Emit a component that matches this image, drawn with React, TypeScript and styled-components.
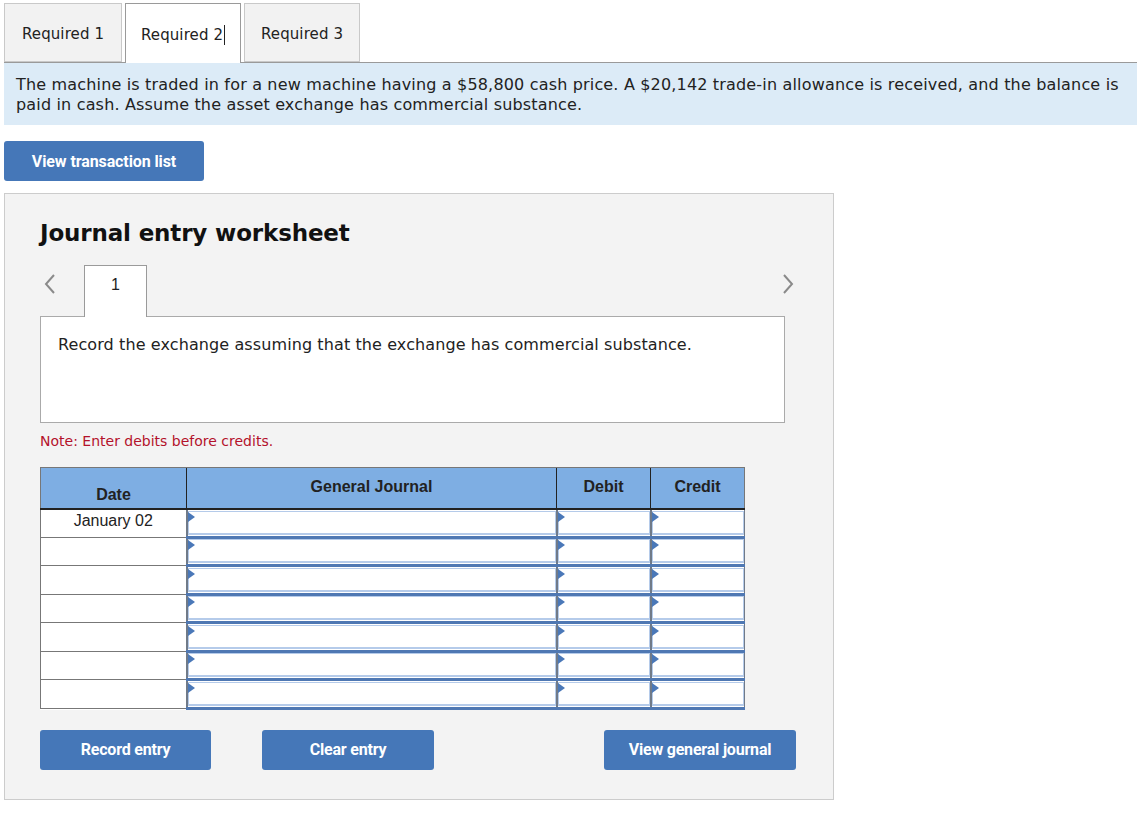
import React from 'react';
import styled, { createGlobalStyle } from 'styled-components';

const GlobalStyle = createGlobalStyle`
  html, body {
    margin: 0;
    padding: 0;
    background: #ffffff;
  }
  body {
    font-family: "DejaVu Sans", Verdana, sans-serif;
    color: #222222;
  }
`;

const rows = ['January 02', '', '', '', '', '', ''];

const ChevronLeft = () => (
  <svg width="12" height="22" viewBox="0 0 12 22">
    <polyline points="10,2 2,11 10,20" fill="none" stroke="#8a8a8a" strokeWidth="2" />
  </svg>
);

const ChevronRight = () => (
  <svg width="12" height="22" viewBox="0 0 12 22">
    <polyline points="2,2 10,11 2,20" fill="none" stroke="#8a8a8a" strokeWidth="2" />
  </svg>
);

const App = () => {
  return (
    <Page>
      <GlobalStyle />
      <Tabs>
        <Tab $width={118}>Required 1</Tab>
        <Tab $width={116} $active>
          Required 2<Caret />
        </Tab>
        <Tab $width={116}>Required 3</Tab>
      </Tabs>
      <Info>
        The machine is traded in for a new machine having a $58,800 cash price. A $20,142 trade-in
        allowance is received, and the balance is paid in cash. Assume the asset exchange has
        commercial substance.
      </Info>
      <TransactionButton>View transaction list</TransactionButton>

      <Worksheet>
        <Title>Journal entry worksheet</Title>
        <NavRow>
          <NavArrow $left>
            <ChevronLeft />
          </NavArrow>
          <EntryTab>1</EntryTab>
          <Spacer />
          <NavArrow>
            <ChevronRight />
          </NavArrow>
        </NavRow>
        <Question>Record the exchange assuming that the exchange has commercial substance.</Question>
        <Note>Note: Enter debits before credits.</Note>

        <Journal>
          <colgroup>
            <col style={{ width: 146 }} />
            <col style={{ width: 370 }} />
            <col style={{ width: 94 }} />
            <col style={{ width: 94 }} />
          </colgroup>
          <thead>
            <tr>
              <HeadCell $bottom>Date</HeadCell>
              <HeadCell>General Journal</HeadCell>
              <HeadCell>Debit</HeadCell>
              <HeadCell>Credit</HeadCell>
            </tr>
          </thead>
          <tbody>
            {rows.map((date, i) => (
              <tr key={i}>
                <DateCell>{date}</DateCell>
                {[0, 1, 2].map((c) => (
                  <InputCell key={c}>
                    <InputBox>
                      <Marker />
                    </InputBox>
                  </InputCell>
                ))}
              </tr>
            ))}
          </tbody>
        </Journal>

        <ButtonRow>
          <ActionButton $width={171}>Record entry</ActionButton>
          <ActionButton $width={172} $offset={51}>
            Clear entry
          </ActionButton>
          <ActionButton $width={192} $offset={170}>
            View general journal
          </ActionButton>
        </ButtonRow>
      </Worksheet>
    </Page>
  );
};

export default App;

const Page = styled.div`
  padding: 3px 0 0 4px;
  width: 1133px;
`;

const Tabs = styled.div`
  display: flex;
  gap: 3px;
  height: 59px;
  border-bottom: 1px solid #9a9a9a;
`;

const Tab = styled.div<{ $width: number; $active?: boolean }>`
  position: relative;
  box-sizing: border-box;
  width: ${(p) => p.$width}px;
  height: ${(p) => (p.$active ? 60 : 59)}px;
  margin-bottom: ${(p) => (p.$active ? -1 : 0)}px;
  display: flex;
  align-items: center;
  justify-content: center;
  padding-top: 2px;
  font-size: 15px;
  letter-spacing: 0.1px;
  color: #222;
  background: ${(p) => (p.$active ? '#ffffff' : '#f2f2f2')};
  border: 1px solid ${(p) => (p.$active ? '#9a9a9a' : '#c9c9c9')};
  border-bottom: ${(p) => (p.$active ? 'none' : '1px solid #c9c9c9')};
`;

const Caret = styled.span`
  display: inline-block;
  width: 1px;
  height: 20px;
  margin-left: 1px;
  background: #222;
`;

const Info = styled.div`
  box-sizing: border-box;
  height: 62px;
  padding: 12px 12px 0 12px;
  background: #dcebf7;
  font-size: 16px;
  line-height: 19.5px;
  letter-spacing: 0.17px;
  color: #222;
`;

const TransactionButton = styled.button`
  display: block;
  margin-top: 16px;
  width: 200px;
  height: 40px;
  border: none;
  border-radius: 3px;
  background: #4577b8;
  color: #ffffff;
  font-family: Roboto, "Liberation Sans", Arial, sans-serif;
  font-weight: 700;
  font-size: 16px;
  letter-spacing: -0.1px;
  padding: 0;
`;

const Worksheet = styled.div`
  box-sizing: border-box;
  margin-top: 12px;
  width: 830px;
  height: 607px;
  padding: 24px 0 0 35px;
  background: #f3f3f3;
  border: 1px solid #cccccc;
`;

const Title = styled.h2`
  margin: 0;
  font-size: 23px;
  line-height: 30px;
  letter-spacing: -0.15px;
  font-weight: 700;
  color: #111;
`;

const NavRow = styled.div`
  display: flex;
  align-items: flex-start;
  width: 756px;
  margin-top: 17px;
`;

const NavArrow = styled.div<{ $left?: boolean }>`
  width: ${(p) => (p.$left ? 44 : 14)}px;
  padding: 8px 0 0 ${(p) => (p.$left ? 4 : 0)}px;
  box-sizing: border-box;
  display: flex;
`;

const EntryTab = styled.div`
  box-sizing: border-box;
  width: 63px;
  height: 52px;
  margin-bottom: -1px;
  padding-top: 10px;
  text-align: center;
  background: #ffffff;
  border: 1px solid #9a9a9a;
  border-bottom: none;
  font-family: "Liberation Sans", Arial, sans-serif;
  font-size: 16px;
  color: #222;
  position: relative;
  z-index: 1;
`;

const Spacer = styled.div`
  flex: 1;
`;

const Question = styled.div`
  box-sizing: border-box;
  width: 745px;
  height: 107px;
  padding: 18px 17px;
  background: #ffffff;
  border: 1px solid #aaaaaa;
  font-size: 16px;
  line-height: 20px;
  letter-spacing: 0.1px;
  color: #222;
`;

const Note = styled.div`
  margin-top: 9px;
  font-size: 14px;
  line-height: 18px;
  color: #b3122b;
`;

const Journal = styled.table`
  margin-top: 17px;
  width: 705px;
  border-collapse: collapse;
  table-layout: fixed;
  font-family: "Liberation Sans", Arial, sans-serif;
  background: #ffffff;
  border: 1px solid #777777;
`;

const HeadCell = styled.th<{ $bottom?: boolean }>`
  height: 41px;
  padding: 0 0 ${(p) => (p.$bottom ? 4 : 2)}px 0;
  box-sizing: border-box;
  background: #7eaee3;
  font-size: 16px;
  font-weight: 700;
  color: #222;
  text-align: center;
  vertical-align: ${(p) => (p.$bottom ? 'bottom' : 'middle')};
  border-left: 1px solid #222;
  border-top: 1px solid #777;
  border-bottom: 2px solid #222;
  &:first-child {
    border-left: 1px solid #777;
  }
`;

const DateCell = styled.td`
  height: 28.5px;
  padding: 0 0 4px 0;
  box-sizing: border-box;
  border: 1px solid #777777;
  font-size: 16px;
  color: #222;
  text-align: center;
`;

const InputCell = styled.td`
  height: 28.5px;
  padding: 0;
  box-sizing: border-box;
  border-left: 2px solid #707a88;
  border-right: 1px solid #707a88;
  border-bottom: 3px solid #4f78b3;
`;

const InputBox = styled.div`
  position: relative;
  box-sizing: border-box;
  height: 24px;
  background: #ffffff;
  border: 1px solid #b5cbea;
  border-bottom: 2px solid #b5cbea;
`;

const Marker = styled.span`
  position: absolute;
  top: 0;
  left: -1px;
  width: 0;
  height: 0;
  border-top: 5px solid transparent;
  border-bottom: 5px solid transparent;
  border-left: 7px solid #4a78b8;
`;

const ButtonRow = styled.div`
  display: flex;
  margin-top: 20px;
`;

const ActionButton = styled.button<{ $width: number; $offset?: number }>`
  width: ${(p) => p.$width}px;
  height: 40px;
  margin-left: ${(p) => p.$offset ?? 0}px;
  padding: 0;
  border: none;
  border-radius: 3px;
  background: #4577b8;
  color: #ffffff;
  font-family: Roboto, "Liberation Sans", Arial, sans-serif;
  font-weight: 700;
  font-size: 16px;
  letter-spacing: -0.2px;
`;
